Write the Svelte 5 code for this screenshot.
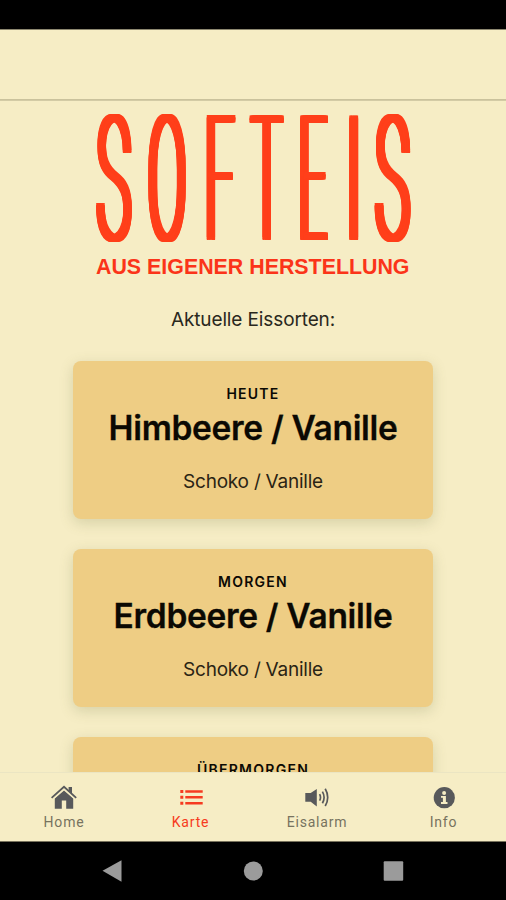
<script>
  // x: centre of the letter, sx: horizontal squeeze; the hairline glyph is then thickened by its shadows
  const letters = [
    { ch: 'S', x: 33.8, sx: 0.57 },
    { ch: 'O', x: 87, sx: 0.56 },
    { ch: 'F', x: 139.5, sx: 0.49 },
    { ch: 'T', x: 186.7, sx: 0.5 },
    { ch: 'E', x: 232.7, sx: 0.48 },
    { ch: 'I', x: 273.7, sx: 0.6 },
    { ch: 'S', x: 312.5, sx: 0.57 }
  ];
  const SY = 1.709;
  const spread = (sx) =>
    [-1.7, 0, 1.7]
      .flatMap((dy) =>
        [-1, -0.75, -0.5, -0.25, 0, 0.25, 0.5, 0.75, 1].map(
          (k) => `${((k * 4.5) / sx).toFixed(2)}px ${(dy / SY).toFixed(2)}px 0 #ff3f1a`
        )
      )
      .join(', ');
  const cards = [
    { day: 'HEUTE', main: 'Himbeere / Vanille', side: 'Schoko / Vanille' },
    { day: 'MORGEN', main: 'Erdbeere / Vanille', side: 'Schoko / Vanille' },
    { day: 'ÜBERMORGEN', main: 'Himbeere / Vanille', side: 'Schoko / Vanille' }
  ];
  const tabs = ['Home', 'Karte', 'Eisalarm', 'Info'];
</script>

<div class="phone">
  <div class="status"></div>
  <header></header>
  <main>
    <svg class="logo" width="346" height="180" viewBox="0 0 346 180">
      {#each letters as l}
        <text class="big" text-anchor="middle" transform="translate({l.x} 135.6) scale({l.sx} {SY})" style="text-shadow: {spread(l.sx)}">{l.ch}</text>
      {/each}
      <text class="sub" x="16" y="171" textLength="313.5" lengthAdjust="spacingAndGlyphs">AUS EIGENER HERSTELLUNG</text>
    </svg>
    <p class="intro">Aktuelle Eissorten:</p>
    {#each cards as c}
      <section class="card">
        <div class="day">{c.day}</div>
        <h2>{c.main}</h2>
        <p class="side">{c.side}</p>
      </section>
    {/each}
  </main>
  <nav class="tabs">
    {#each tabs as t}
      <div class="tab" class:active={t === 'Karte'}>
        <svg width="28" height="26" viewBox="0 0 28 26">
          {#if t === 'Home'}
            <path d="M14 5.6 4.8 13.6v10.2h7v-8.2h4.4v8.2h7V13.6z" fill="currentColor" />
            <path d="M18.6 2h3.4v7.4l-3.4-3.3z" fill="currentColor" />
            <path class="gap" d="M2.6 14.3 14 4 25.4 14.3" />
            <path d="M1.6 12.8 14 1.8 26.2 12.8" fill="none" stroke="currentColor" stroke-width="1.8" />
          {:else if t === 'Karte'}
            <path d="M8.3 6.6h17.4M8.3 12.3h17.4M8.3 18.3h17.4" fill="none" stroke="currentColor" stroke-width="2.5" />
            <path d="M3.3 5h3v3h-3zM3.3 10.8h3v3h-3zM3.3 16.8h3v3h-3z" fill="currentColor" />
          {:else if t === 'Eisalarm'}
            <path d="M2.3 8h5.4L13.8 4v17.4l-6.1-4.6H2.3z" fill="currentColor" />
            <path d="M16.6 9.2q1.8 3.2 0 6.4M19.4 6.6q3.4 5.8 0 11.6M22.2 3.8q5 8.6 0 17.2" fill="none" stroke="currentColor" stroke-width="1.7" />
          {:else}
            <circle cx="14.3" cy="12.7" r="10.6" fill="currentColor" />
            <circle class="cut" cx="14.1" cy="7.9" r="2" />
            <path class="cut" d="M11 11h4.9v6.1h1.6v1.8H11v-1.8h1.9v-4.3H11z" />
          {/if}
        </svg>
        <span>{t}</span>
      </div>
    {/each}
  </nav>
  <div class="system">
    <svg width="506" height="58" viewBox="0 0 506 58">
      <path d="M102.5 28.8 121.5 18.3v21.5z" />
      <circle cx="253.3" cy="29" r="9.5" />
      <rect x="383.7" y="19.2" width="19.5" height="19.5" rx="1" />
    </svg>
  </div>
</div>

<style>
  .phone {
    width: 506px;
    height: 900px;
    display: flex;
    flex-direction: column;
    overflow: hidden;
    background: #f6edc5;
    color: #0b0903;
    font-family: Inter, 'Liberation Sans', sans-serif;
  }
  .status {
    height: 30px;
    flex: none;
    box-sizing: border-box;
    background: #000;
    border-bottom: 1px solid #8d8870;
  }
  header {
    height: 69px;
    flex: none;
    box-shadow: 0 1px 0 #cac29c, 0 2px 0 #d3cba5;
  }
  main {
    flex: 1;
    min-height: 0;
    overflow: hidden;
    display: flex;
    flex-direction: column;
    align-items: center;
    margin-top: 4px;
  }
  .logo {
    flex: none;
    display: block;
  }
  .big {
    font-family: Roboto, sans-serif;
    font-weight: 100;
    font-size: 100px;
    fill: #ff3f1a;
  }
  .sub {
    font-family: 'Liberation Sans', sans-serif;
    font-weight: 700;
    font-size: 22px;
    fill: #fb3419;
  }
  p,
  h2 {
    margin: 0;
    white-space: nowrap;
  }
  .intro {
    flex: none;
    margin-top: 23px;
    height: 54.5px;
    line-height: 28px;
    font-size: 19px;
    letter-spacing: -0.12px;
    color: #2a281d;
  }
  .card {
    flex: none;
    width: 360px;
    height: 158.5px;
    margin-bottom: 29.5px;
    border-radius: 8px;
    background: #eecd84;
    box-shadow: 0 4px 14px rgba(100, 110, 60, 0.22);
    text-align: center;
    box-sizing: border-box;
    padding-top: 23.5px;
  }
  .day {
    font-size: 14px;
    font-weight: 600;
    line-height: 20px;
    letter-spacing: 1.25px;
  }
  h2 {
    padding-top: 1px;
    font-size: 33.5px;
    font-weight: 600;
    line-height: 46px;
    letter-spacing: -0.32px;
    -webkit-text-stroke: 0.3px #0b0903;
  }
  .side {
    margin-top: 17px;
    font-size: 19px;
    line-height: 28px;
    letter-spacing: -0.23px;
    color: #2a2414;
  }
  .tabs {
    flex: none;
    height: 70px;
    display: flex;
    background: #f6edc5;
    border-top: 1px solid #ebe5c3;
    border-bottom: 1px solid #77725c;
    box-sizing: border-box;
    color: #58595b;
  }
  .tab {
    flex: 1;
    display: flex;
    flex-direction: column;
    align-items: center;
    padding-top: 12px;
    padding-left: 1.5px;
  }
  .tab span {
    font-family: Roboto, sans-serif;
    font-size: 14px;
    line-height: 20px;
    letter-spacing: 0.8px;
    margin-top: 1px;
    color: #77735f;
  }
  .active,
  .tab.active span {
    color: #f63a20;
  }
  .cut {
    fill: #f6edc5;
  }
  .gap {
    fill: none;
    stroke: #f6edc5;
    stroke-width: 1.2px;
  }
  .system {
    flex: none;
    height: 58px;
    background: #000;
  }
  .system svg {
    display: block;
    fill: #9b9b9b;
  }
</style>
